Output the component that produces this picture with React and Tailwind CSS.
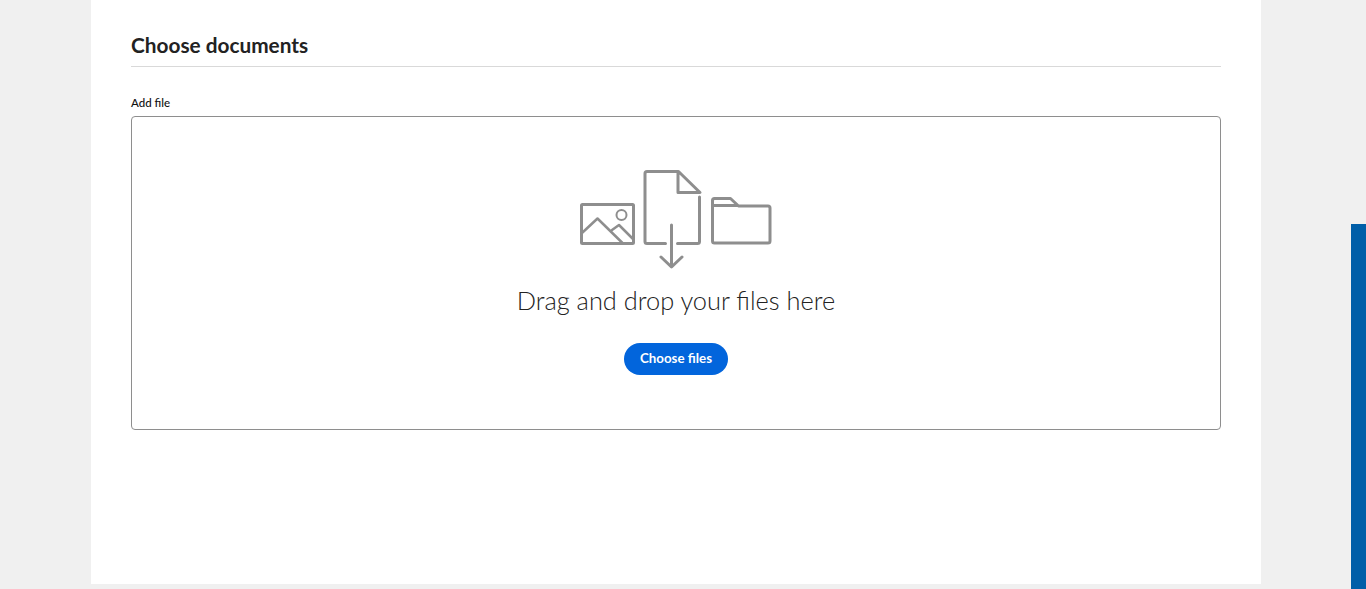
export default function App() {
  return (
    <div className="relative min-h-[589px] overflow-hidden bg-[#f0f0f0] font-['Lato',sans-serif]">
      {/* Panel */}
      <main className="ml-[91px] h-[584px] w-[1170px] bg-white px-10">
        <h2 className="h-[67px] border-b border-[#d9d9d9] pt-[31px] text-[20.8px] font-bold leading-[28px] text-[#222222]">
          Choose documents
        </h2>
        <label className="mt-[28px] block h-[21px] text-[11.5px] font-medium leading-[16px] text-[#111111]">Add file</label>

        {/* Drop zone */}
        <section className="flex h-[314px] flex-col items-center rounded-[4px] border border-[#8e8e8e]">
          <svg
            className="mr-[2px] mt-[43px] shrink-0"
            width="210"
            height="115"
            viewBox="570 160 210 115"
            fill="none"
            stroke="#8e8e8e"
            strokeWidth="3"
            strokeLinecap="round"
            strokeLinejoin="round"
          >
            {/* image */}
            <rect x="581.500" y="204.500" width="52" height="39" rx="1" />
            <circle cx="621.500" cy="215" r="5" strokeWidth="2" />
            <path d="M582.500 232.500l15-14 25 24.500" strokeWidth="2.500" />
            <path d="M612 230l7-5 14 14" strokeWidth="2.500" />
            {/* document */}
            <path d="M665.500 243.500h-18.500a2 2 0 0 1-2-2V173.500a2 2 0 0 1 2-2h31.500l21.500 21h-22v-21" />
            <path d="M699.500 197v44.500a2 2 0 0 1-2 2h-20" />
            {/* arrow */}
            <path d="M671.500 225v41M661 257l10.500 10 10.500-10" />
            {/* folder */}
            <path d="M712.500 205.500v-5a2 2 0 0 1 2-2h16l8 7.500h29.500a2 2 0 0 1 2 2v33a2 2 0 0 1-2 2h-53.500a2 2 0 0 1-2-2zh25.500" />
          </svg>
          <p className="mt-[9px] text-[25.4px] font-light leading-[32px] text-[#222222]">Drag and drop your files here</p>
          <button className="mt-[27px] h-8 w-[104px] rounded-full bg-[#0265dc] pb-[1px] text-[13.3px] font-bold text-white">
            Choose files
          </button>
        </section>
      </main>

      {/* Blue strip at the right edge */}
      <div className="absolute right-0 top-[224px] h-[365px] w-[15px] bg-[#005ea8]" />
    </div>
  );
}
